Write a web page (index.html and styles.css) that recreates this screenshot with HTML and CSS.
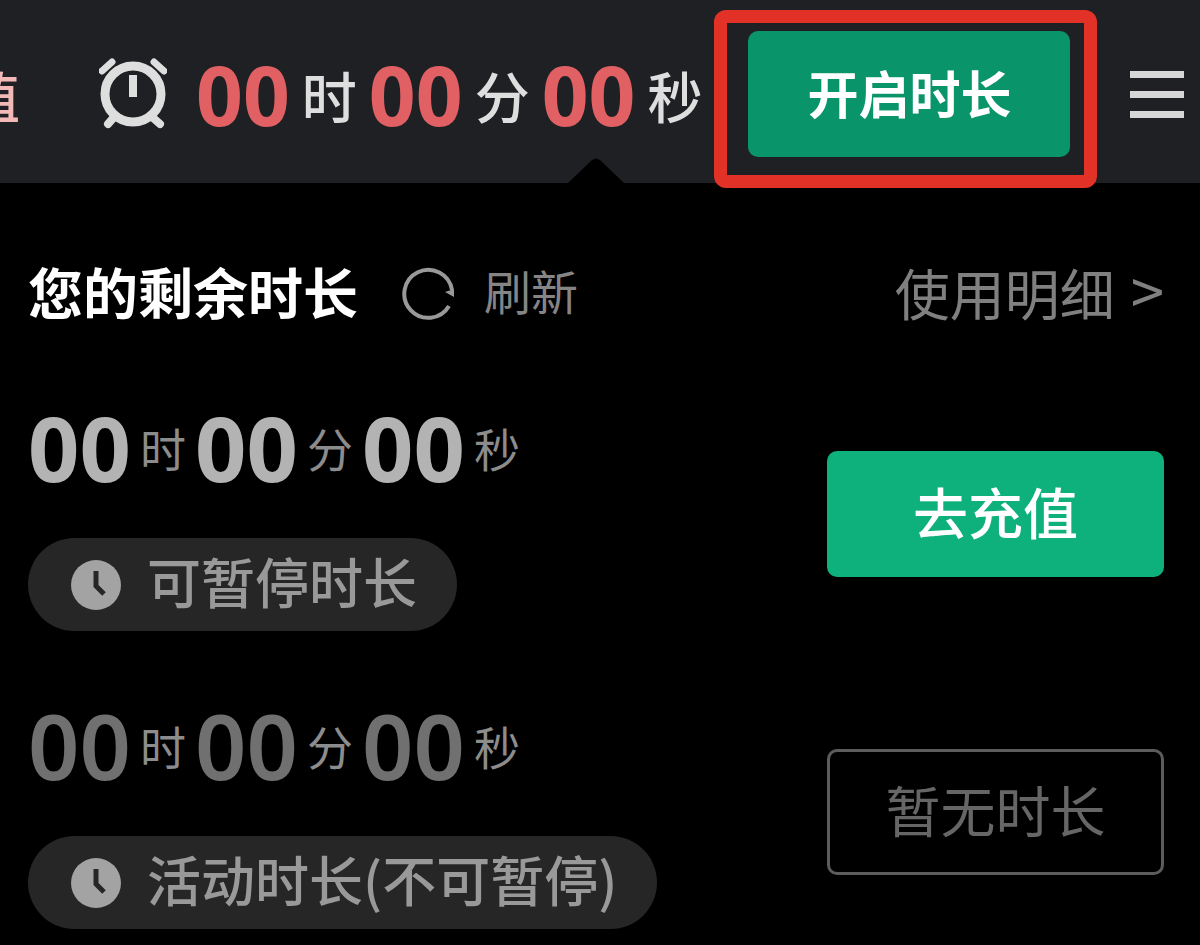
FILE: index.html
```html
<!DOCTYPE html>
<html lang="zh-CN">
<head>
  <meta charset="UTF-8" />
  <meta name="viewport" content="width=device-width, initial-scale=1.0"/>
  <title>剩余时长</title>
  <link rel="stylesheet" href="styles.css">
</head>
<body>
  <header class="topbar">
    <a class="topbar-link" href="#">值</a>
    <svg class="alarm" viewBox="0 0 68 72" fill="none" stroke="#dedede">
      <circle cx="34" cy="36" r="28" stroke-width="9"/>
      <path d="M34 17v22" stroke-width="8"/>
      <path d="M3 13L13 4M55 4l10 9" stroke-width="7" stroke-linecap="round"/>
      <path d="M16 58l-7 8M52 58l9 8" stroke-width="8" stroke-linecap="round"/>
    </svg>
    <div class="timer timer-top">
      <span class="num">00</span><span class="unit">时</span>
      <span class="num">00</span><span class="unit">分</span>
      <span class="num">00</span><span class="unit">秒</span>
    </div>
    <div class="start-box">
      <button class="btn btn-start">开启时长</button>
    </div>
    <button class="menu" aria-label="菜单">
      <span></span><span></span><span></span>
    </button>
  </header>

  <main class="panel">
    <svg class="arrow" viewBox="0 0 56 26"><path d="M0 26L23 4q5-5 10 0l23 22z"/></svg>

    <div class="panel-head">
      <h1>您的剩余时长</h1>
      <button class="refresh">
        <svg viewBox="0 0 54 54" fill="none" stroke="#999" stroke-width="4">
          <path d="M47 40A24 24 0 1 1 50 24"/>
          <path d="M43 26l9-3v8z" fill="#999" stroke="none"/>
        </svg>
        刷新
      </button>
      <a class="detail" href="#">使用明细<span>&gt;</span></a>
    </div>

    <section class="item">
      <div class="info">
        <div class="timer">
          <span class="num">00</span><span class="unit">时</span>
          <span class="num">00</span><span class="unit">分</span>
          <span class="num">00</span><span class="unit">秒</span>
        </div>
        <div class="tag">
          <svg viewBox="0 0 50 50">
            <circle cx="25" cy="25" r="25" fill="#a3a3a3"/>
            <path d="M25 11v15l8 8" fill="none" stroke="#262626" stroke-width="5"/>
          </svg>
          <span>可暂停时长</span>
        </div>
      </div>
      <button class="btn btn-pay">去充值</button>
    </section>

    <section class="item item-off">
      <div class="info">
        <div class="timer">
          <span class="num">00</span><span class="unit">时</span>
          <span class="num">00</span><span class="unit">分</span>
          <span class="num">00</span><span class="unit">秒</span>
        </div>
        <div class="tag">
          <svg viewBox="0 0 50 50">
            <circle cx="25" cy="25" r="25" fill="#a3a3a3"/>
            <path d="M25 11v15l8 8" fill="none" stroke="#262626" stroke-width="5"/>
          </svg>
          <span>活动时长(不可暂停)</span>
        </div>
      </div>
      <button class="btn btn-none">暂无时长</button>
    </section>
  </main>
</body>
</html>
```

FILE: styles.css
```css
* {
  box-sizing: border-box;
}

body {
  margin: 0;
  background-color: #000;
  color: #999;
  font-family: "Noto Sans CJK SC", sans-serif;
  font-size: 55px;
  line-height: 56px;
}

button {
  font-family: inherit;
  font-size: inherit;
  line-height: inherit;
  color: inherit;
  border: none;
  background: none;
  padding: 0;
  cursor: pointer;
}

a {
  color: inherit;
  text-decoration: none;
}

.topbar {
  display: flex;
  align-items: center;
  padding: 31px 16px 26px 0;
  background-color: #1f2024;
}

.topbar-link {
  display: flex;
  justify-content: flex-end;
  width: 20px;
  overflow: hidden;
  color: #f2b9b7;
  font-weight: 500;
}

.alarm {
  width: 68px;
  height: 72px;
  margin: 0 29px 0 79px;
}

.timer {
  display: flex;
  align-items: center;
  gap: 9px;
  height: 102px;
  white-space: nowrap;
}

.num {
  font-family: "Noto Sans", sans-serif;
  font-size: 90px;
  font-weight: bold;
  color: #b3b3b3;
}

.unit {
  font-size: 46px;
  color: #8c8c8c;
}

.timer-top {
  gap: 12px;
}

.timer-top .num {
  font-size: 82px;
  color: #e06064;
}

.timer-top .unit {
  font-size: 55px;
  font-weight: 500;
  color: #dedede;
}

.btn {
  width: 337px;
  height: 126px;
  padding-bottom: 8px;
  border-radius: 10px;
  white-space: nowrap;
}

.start-box {
  position: relative;
  margin-left: 46px;
}

/* red highlight around the start button */
.start-box::after {
  content: "";
  position: absolute;
  inset: -21px -27px -31px -34px;
  border: 13px solid #e23127;
  border-radius: 12px;
  pointer-events: none;
}

.btn-start {
  display: block;
  width: 322px;
  padding-bottom: 4px;
  background-color: #0a946a;
  color: #fff;
  font-size: 51px;
  font-weight: bold;
}

.menu {
  display: flex;
  flex-direction: column;
  gap: 13px;
  width: 54px;
  margin-left: auto;
}

.menu span {
  height: 7px;
  background-color: #d6d6d6;
}

.panel {
  position: relative;
  padding: 77px 36px 16px 28px;
}

.arrow {
  position: absolute;
  top: -26px;
  left: 568px;
  width: 56px;
  height: 26px;
}

.panel-head {
  display: flex;
  align-items: center;
  margin-bottom: 76px;
}

h1 {
  margin: 0;
  font-size: 55px;
  color: #fff;
}

.refresh {
  display: flex;
  align-items: center;
  gap: 28px;
  margin-left: 44px;
  font-size: 47px;
  color: #858585;
}

.refresh svg {
  width: 54px;
  height: 54px;
  margin-top: 6px;
}

.detail {
  margin-left: auto;
  color: #808080;
}

.detail span {
  margin-left: 16px;
  font-size: 60px;
}

.item {
  display: flex;
  justify-content: space-between;
  align-items: center;
}

.item-off {
  margin-top: 63px;
}

.tag {
  display: flex;
  align-items: center;
  gap: 26px;
  width: fit-content;
  height: 93px;
  margin-top: 40px;
  padding: 0 40px 0 43px;
  border-radius: 47px;
  background-color: #262626;
  color: #999;
  font-size: 54px;
  font-weight: 500;
}

.tag svg {
  width: 50px;
  height: 50px;
}

.tag span {
  padding-bottom: 8px;
}

.btn-pay {
  background-color: #0eb07b;
  color: #fff;
  font-weight: 500;
}

.item-off .num {
  font-weight: 600;
  color: #707070;
}

.btn-none {
  border: 3px solid #5c5c5c;
  color: #666;
}
```
